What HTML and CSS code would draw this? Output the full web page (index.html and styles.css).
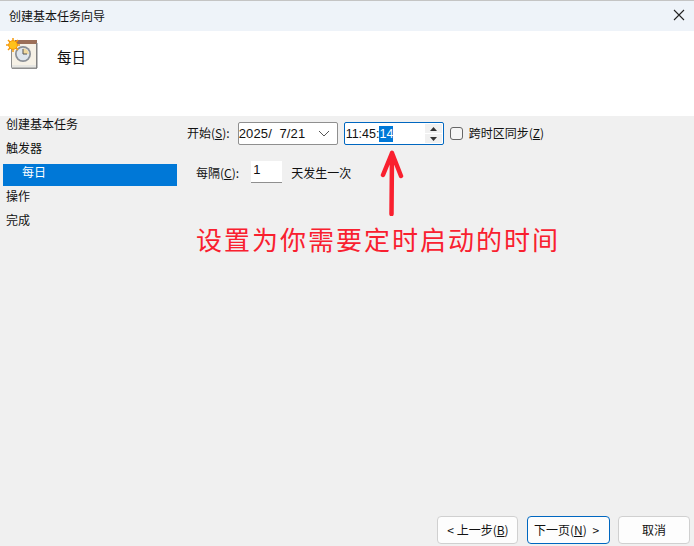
FILE: index.html
```html
<!DOCTYPE html>
<html lang="zh-CN">
<head>
<meta charset="utf-8">
<title>创建基本任务向导</title>
<link rel="stylesheet" href="styles.css">
</head>
<body>
<div class="window">
  <header class="titlebar">
    <span class="title">创建基本任务向导</span>
    <svg class="close" width="12" height="12" viewBox="0 0 12 12"><path d="M1 1L11 11M11 1L1 11" stroke="#222" stroke-width="1.1" fill="none"/></svg>
  </header>
  <section class="banner">
    <svg class="task-icon" width="32" height="32" viewBox="0 0 32 32">
      <path d="M5 5H31V31H6L5 29Z" fill="#8f8f8f"/>
      <rect x="6" y="3" width="24" height="25" fill="#f6f1e6"/>
      <rect x="6" y="27" width="24" height="2.5" fill="#e6e6e2"/>
      <rect x="9" y="2" width="22" height="4" fill="#9c6f58"/>
      <rect x="30" y="5" width="1.5" height="25" fill="#808080"/>
      <circle cx="17" cy="16" r="8" fill="#8a8f96"/>
      <circle cx="17" cy="16" r="6.3" fill="#dfe6ee"/>
      <path d="M17 16V10.2A5.8 5.8 0 0 1 22.8 16Z" fill="#f0d9a0"/>
      <path d="M17 11V16H21" stroke="#555" stroke-width="1" fill="none"/>
      <g stroke="#f59a0c" stroke-width="1.5">
        <path d="M7 0V14M0 7H14M2 2L12 12M12 2L2 12"/>
      </g>
      <circle cx="7" cy="7" r="4.4" fill="#ffc21a" stroke="#f08a00" stroke-width=".8"/>
    </svg>
    <h1 class="banner-title">每日</h1>
  </section>
  <main class="body">
    <nav class="steps">
      <div class="step">创建基本任务</div>
      <div class="step">触发器</div>
      <div class="step selected">每日</div>
      <div class="step">操作</div>
      <div class="step">完成</div>
    </nav>
    <div class="form">
      <div class="row row-start">
        <label class="label">开始(<u>S</u>):</label>
        <div class="field date">
          <span>2025/&nbsp;&nbsp;7/21</span>
          <svg class="chev" width="12" height="7" viewBox="0 0 12 7"><path d="M1 1L6 6L11 1" stroke="#555" stroke-width="1" fill="none"/></svg>
        </div>
        <div class="field time">
          <span>11:45:<span class="sel">14</span></span>
          <div class="spin">
            <span class="spin-btn"><svg width="7" height="4" viewBox="0 0 7 4"><path d="M3.5 0L7 4H0Z" fill="#333"/></svg></span>
            <span class="spin-btn"><svg width="7" height="4" viewBox="0 0 7 4"><path d="M0 0H7L3.5 4Z" fill="#333"/></svg></span>
          </div>
        </div>
        <span class="check"></span>
        <label class="label">跨时区同步(<u>Z</u>)</label>
      </div>
      <div class="row row-every">
        <label class="label">每隔(<u>C</u>):</label>
        <div class="num">1</div>
        <span class="label">天发生一次</span>
      </div>
      <svg class="arrow" width="24" height="66" viewBox="0 0 24 66">
        <path d="M12 3L11.5 64M12 3L3 25M12 3L21 26" stroke="#f9202f" stroke-width="4.5" stroke-linecap="round" fill="none"/>
      </svg>
      <div class="note">设置为你需要定时启动的时间</div>
    </div>
  </main>
  <footer class="actions">
    <button class="btn back">&lt; 上一步(<u>B</u>)</button>
    <button class="btn next">下一页(<u>N</u>) &gt;</button>
    <button class="btn cancel">取消</button>
  </footer>
</div>
</body>
</html>
```
FILE: styles.css
```css
* { box-sizing: border-box; }
html, body { margin: 0; padding: 0; }
body {
  width: 694px;
  height: 546px;
  overflow: hidden;
  font-family: "Noto Sans CJK SC", "Liberation Sans", sans-serif;
  font-size: 12px;
  color: #111;
}
.window {
  width: 694px;
  height: 546px;
  display: flex;
  flex-direction: column;
  background: #f0f0f0;
}
.titlebar {
  height: 31px;
  flex: none;
  display: flex;
  align-items: center;
  justify-content: space-between;
  padding: 0 9px 2px;
  background: #eef3f9;
  border-top: 1px solid #c4c4c4;
}
.title { font-size: 12px; color: #111; }
.banner {
  height: 85px;
  flex: none;
  background: #fff;
  display: flex;
  align-items: flex-start;
  padding: 7px 0 0 6px;
}
.task-icon { flex: none; }
.banner-title {
  margin: 9px 0 0 19px;
  font-size: 14.5px;
  line-height: 20px;
  font-weight: 400;
  color: #111;
}
.body {
  flex: 1;
  display: flex;
  min-height: 0;
}
.steps {
  width: 177px;
  flex: none;
  padding: 0 0 0 3px;
}
.step {
  height: 24px;
  line-height: 16px;
  padding-left: 3px;
  color: #111;
}
.step.selected {
  height: 22px;
  margin: 0 0 2px;
  padding-left: 19px;
  background: #0078d7;
  color: #fff;
  line-height: 15px;
}
.form {
  position: relative;
  flex: 1;
  padding: 6px 0 0 10px;
}
.row { display: flex; align-items: center; }
.row-start { height: 23px; }
.row-start .label { padding-bottom: 2px; }
.row-every { height: 22px; margin-top: 16px; padding-left: 9px; }
.label { white-space: nowrap; color: #111; }
.field {
  height: 23px;
  width: 100px;
  display: flex;
  align-items: center;
  background: #fff;
  font-family: "Liberation Sans", sans-serif;
  white-space: nowrap;
}
.date {
  margin-left: 8px;
  border: 1px solid #8f8f8f;
  border-radius: 2px;
  justify-content: space-between;
  padding-right: 7px;
  font-size: 13px;
  letter-spacing: .15px;
}
.chev { flex: none; }
.time {
  margin-left: 6px;
  padding-left: 1px;
  border: 1px solid #0067c0;
  border-radius: 2px;
  justify-content: space-between;
  padding-right: 1px;
  font-size: 12.5px;
}
.sel {
  display: inline-block;
  line-height: 16px;
  background: #0078d7;
  color: #fff;
}
.spin {
  width: 17px;
  height: 19px;
  display: flex;
  flex-direction: column;
  gap: 1px;
}
.spin-btn {
  flex: 1;
  display: flex;
  align-items: center;
  justify-content: center;
  background: #f0f0f0;
}
.check {
  width: 13px;
  height: 13px;
  margin: 0 6px 0 6px;
  border: 1px solid #666;
  border-radius: 3px;
  background: #f5f5f5;
}
.num {
  width: 31px;
  height: 22px;
  margin: 0 9px 0 12px;
  padding: 0 0 4px 2px;
  display: flex;
  align-items: center;
  background: #fff;
  border-bottom: 1px solid #8f8f8f;
  font-family: "Liberation Sans", sans-serif;
  font-size: 13px;
}
.arrow {
  position: absolute;
  left: 203px;
  top: 34px;
}
.note {
  position: absolute;
  left: 19px;
  top: 103px;
  font-size: 26px;
  line-height: 40px;
  letter-spacing: 2px;
  color: #f9202f;
  white-space: nowrap;
}
.actions {
  flex: none;
  height: 30px;
  display: flex;
  padding: 0 4px 2px 437px;
  background: #f0f0f0;
}
.btn {
  height: 28px;
  padding: 0 0 2px;
  background: #fdfdfd;
  border: 1px solid #d0d0d0;
  border-radius: 4px;
  font-family: inherit;
  font-size: 12px;
  color: #111;
}
.back { width: 81px; padding-left: 1px; }
.next { width: 83px; margin-left: 9px; border-color: #0067c0; word-spacing: 3px; padding-right: 4px; }
.cancel { width: 72px; margin-left: 8px; }
```
